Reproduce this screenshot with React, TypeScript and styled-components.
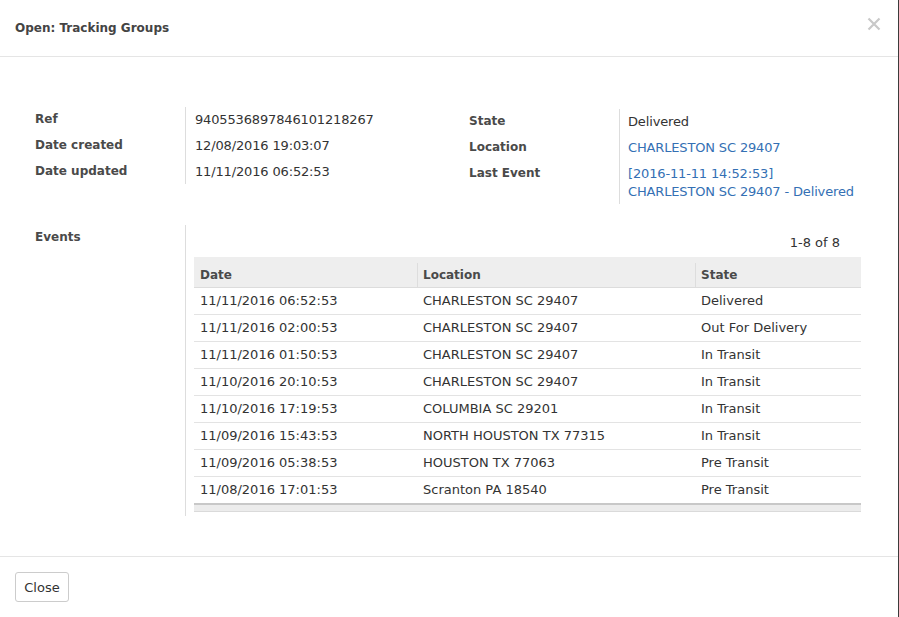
import React from "react";
import styled, { createGlobalStyle } from "styled-components";

const Global = createGlobalStyle`
  html, body { margin: 0; padding: 0; }
  body {
    background: #3b3b3b;
    font-family: "DejaVu Sans", "Liberation Sans", sans-serif;
    font-size: 13px;
    color: #333;
  }
`;

const Modal = styled.div`
  width: 898px;
  height: 617px;
  background: #fff;
  display: flex;
  flex-direction: column;
`;

const Header = styled.div`
  height: 56px;
  flex: none;
  border-bottom: 1px solid #e5e5e5;
  padding: 0 15px;
  display: flex;
  align-items: center;
  justify-content: space-between;
`;

const Title = styled.h4`
  margin: 0;
  font-size: 12px;
  font-weight: bold;
  color: #444;
`;

const CloseX = styled.button`
  border: 0;
  background: none;
  padding: 0;
  margin: -8px 2px 0 0;
  width: 14px;
  height: 14px;
  display: flex;
  cursor: pointer;
`;

const Body = styled.div`
  flex: 1;
  padding: 50px 37px 0 35px;
  display: flex;
  flex-direction: column;
  gap: 21px;
`;

const DetailsRow = styled.div`
  display: flex;
  align-items: flex-start;
`;

const InfoGroup = styled.div<{ $shift?: number; $fill?: boolean }>`
  width: ${(p) => (p.$fill ? "auto" : "434px")};
  flex: ${(p) => (p.$fill ? "1 1 auto" : "none")};
  min-width: 0;
  display: flex;
  margin-top: ${(p) => p.$shift ?? 0}px;
`;

const LabelList = styled.div`
  width: 150px;
  flex: none;
  padding: 3px 0 3px;
  display: flex;
  flex-direction: column;
  gap: 8px;
`;

const Label = styled.div`
  line-height: 18px;
  font-size: 12px;
  font-weight: bold;
  color: #4a4a4a;
`;

const ValueList = styled.div<{ $pad?: number }>`
  border-left: 1px solid #ddd;
  padding: 4px 0 3px ${(p) => p.$pad ?? 9}px;
  display: flex;
  flex-direction: column;
  gap: 8px;
`;

const Value = styled.div<{ $link?: boolean }>`
  line-height: 18px;
  letter-spacing: -0.15px;
  color: ${(p) => (p.$link ? "#3470b4" : "#333")};
  white-space: nowrap;
`;

const EventsRow = styled.div`
  display: flex;
  align-items: stretch;
`;

const EventsLabelCol = styled.div`
  width: 150px;
  flex: none;
  padding-top: 3px;
`;

const EventsContent = styled.div`
  flex: 1;
  border-left: 1px solid #ddd;
  padding: 9px 0 4px 8px;
`;

const Pager = styled.div`
  text-align: right;
  line-height: 18px;
  padding-right: 21px;
  margin-bottom: 5px;
  color: #333;
`;

const Table = styled.table`
  width: 667px;
  border-collapse: collapse;
  table-layout: fixed;
`;

const Th = styled.th`
  position: relative;
  height: 30px;
  box-sizing: border-box;
  padding: 7px 6px 0;
  background: #eee;
  border-bottom: 1px solid #dcdcdc;
  text-align: left;
  font-size: 12px;
  font-weight: bold;
  color: #4a4a4a;
  & + &::before {
    content: "";
    position: absolute;
    left: 0;
    top: 6px;
    bottom: 0;
    width: 1px;
    background: #ddd;
  }
`;

const Td = styled.td`
  height: 26px;
  padding: 0 6px;
  border-bottom: 1px solid #e3e3e3;
  white-space: nowrap;
  color: #333;
  tr:last-child > & {
    border-bottom: 2px solid #c8c8c8;
  }
`;

const FootBand = styled.td`
  height: 6px;
  padding: 0;
  background: #ececec;
  border-bottom: 1px solid #dadada;
`;

const Footer = styled.div`
  flex: none;
  border-top: 1px solid #e5e5e5;
  padding: 15px;
  height: 61px;
  box-sizing: border-box;
`;

const Button = styled.button`
  height: 30px;
  width: 54px;
  padding: 0;
  border: 1px solid #ccc;
  border-radius: 3px;
  background: #fff;
  font-family: inherit;
  font-size: 13px;
  color: #333;
  cursor: pointer;
`;

const events = [
  ["11/11/2016 06:52:53", "CHARLESTON SC 29407", "Delivered"],
  ["11/11/2016 02:00:53", "CHARLESTON SC 29407", "Out For Delivery"],
  ["11/11/2016 01:50:53", "CHARLESTON SC 29407", "In Transit"],
  ["11/10/2016 20:10:53", "CHARLESTON SC 29407", "In Transit"],
  ["11/10/2016 17:19:53", "COLUMBIA SC 29201", "In Transit"],
  ["11/09/2016 15:43:53", "NORTH HOUSTON TX 77315", "In Transit"],
  ["11/09/2016 05:38:53", "HOUSTON TX 77063", "Pre Transit"],
  ["11/08/2016 17:01:53", "Scranton PA 18540", "Pre Transit"],
];

export default function App() {
  return (
    <>
      <Global />
      <Modal>
        <Header>
          <Title>Open: Tracking Groups</Title>
          <CloseX aria-label="Close">
            <svg width="14" height="14" viewBox="0 0 14 14">
              <path d="M1.5 1.5 L12.5 12.5 M12.5 1.5 L1.5 12.5" stroke="#c9c9c9" strokeWidth="2.2" />
            </svg>
          </CloseX>
        </Header>
        <Body>
          <DetailsRow>
            <InfoGroup>
              <LabelList>
                <Label>Ref</Label>
                <Label>Date created</Label>
                <Label>Date updated</Label>
              </LabelList>
              <ValueList>
                <Value>9405536897846101218267</Value>
                <Value>12/08/2016 19:03:07</Value>
                <Value>11/11/2016 06:52:53</Value>
              </ValueList>
            </InfoGroup>
            <InfoGroup $shift={2} $fill>
              <LabelList>
                <Label>State</Label>
                <Label>Location</Label>
                <Label>Last Event</Label>
              </LabelList>
              <ValueList $pad={8}>
                <Value>Delivered</Value>
                <Value $link>CHARLESTON SC 29407</Value>
                <Value $link>
                  [2016-11-11 14:52:53]
                  <br />
                  CHARLESTON SC 29407 - Delivered
                </Value>
              </ValueList>
            </InfoGroup>
          </DetailsRow>
          <EventsRow>
            <EventsLabelCol>
              <Label>Events</Label>
            </EventsLabelCol>
            <EventsContent>
              <Pager>1-8 of 8</Pager>
              <Table>
                <colgroup>
                  <col style={{ width: 223 }} />
                  <col style={{ width: 278 }} />
                  <col style={{ width: 166 }} />
                </colgroup>
                <thead>
                  <tr>
                    <Th>Date</Th>
                    <Th>Location</Th>
                    <Th>State</Th>
                  </tr>
                </thead>
                <tbody>
                  {events.map((e, i) => (
                    <tr key={i}>
                      <Td>{e[0]}</Td>
                      <Td>{e[1]}</Td>
                      <Td>{e[2]}</Td>
                    </tr>
                  ))}
                </tbody>
                <tfoot>
                  <tr>
                    <FootBand colSpan={3} />
                  </tr>
                </tfoot>
              </Table>
            </EventsContent>
          </EventsRow>
        </Body>
        <Footer>
          <Button>Close</Button>
        </Footer>
      </Modal>
    </>
  );
}
